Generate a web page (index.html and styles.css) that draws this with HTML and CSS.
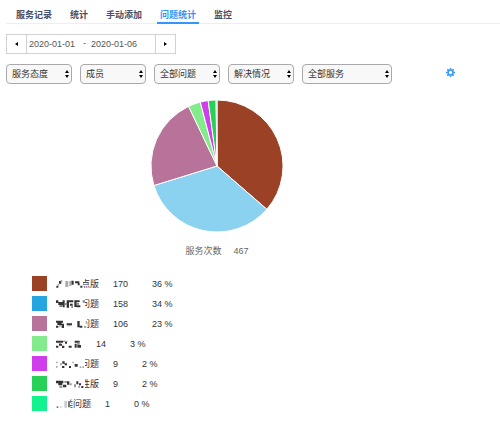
FILE: index.html
```
<!DOCTYPE html>
<html lang="zh-CN">
<head>
    <meta charset="UTF-8">
    <meta name="viewport" content="width=device-width, initial-scale=1.0">
    <title>问题统计</title>
    <link rel="stylesheet" href="styles.css">
</head>
<body>
    <nav class="tabs">
        <a href="#">服务记录</a>
        <a href="#">统计</a>
        <a href="#">手动添加</a>
        <a href="#" class="active">问题统计</a>
        <a href="#">监控</a>
    </nav>

    <div class="date-range">
        <button type="button" aria-label="前一段"><svg width="3" height="4" viewBox="0 0 3 4"><path d="M3 0v4L0 2z"/></svg></button>
        <div class="dates">
            <input type="text" value="2020-01-01" aria-label="开始日期">
            <span>-</span>
            <input type="text" value="2020-01-06" aria-label="结束日期">
        </div>
        <button type="button" aria-label="后一段"><svg width="3" height="4" viewBox="0 0 3 4"><path d="M0 0v4l3-2z"/></svg></button>
    </div>

    <div class="filters">
        <div class="select-box">
            <select aria-label="服务态度"><option>服务态度</option></select>
            <svg width="4" height="8" viewBox="0 0 4 8"><path d="M0 3l2-3 2 3zM0 5h4L2 8z"/></svg>
        </div>
        <div class="select-box">
            <select aria-label="成员"><option>成员</option></select>
            <svg width="4" height="8" viewBox="0 0 4 8"><path d="M0 3l2-3 2 3zM0 5h4L2 8z"/></svg>
        </div>
        <div class="select-box">
            <select aria-label="全部问题"><option>全部问题</option></select>
            <svg width="4" height="8" viewBox="0 0 4 8"><path d="M0 3l2-3 2 3zM0 5h4L2 8z"/></svg>
        </div>
        <div class="select-box">
            <select aria-label="解决情况"><option>解决情况</option></select>
            <svg width="4" height="8" viewBox="0 0 4 8"><path d="M0 3l2-3 2 3zM0 5h4L2 8z"/></svg>
        </div>
        <div class="select-box wide">
            <select aria-label="全部服务"><option>全部服务</option></select>
            <svg width="4" height="8" viewBox="0 0 4 8"><path d="M0 3l2-3 2 3zM0 5h4L2 8z"/></svg>
        </div>
        <button type="button" class="settings" aria-label="设置">
            <svg width="9" height="9" viewBox="0 0 18 18" fill="none" stroke="#3296fa">
                <circle cx="9" cy="9" r="5" stroke-width="3"/>
                <path stroke-width="3" d="M9 0v3M9 15v3M0 9h3M15 9h3M2.6 2.6l2.2 2.2M13.2 13.2l2.2 2.2M2.6 15.4l2.2-2.2M13.2 4.8l2.2-2.2"/>
            </svg>
        </button>
    </div>

    <div class="chart">
        <svg class="pie" width="134" height="134" viewBox="-67 -67 134 134">
            <path fill="#9b4226" d="M0 0V-66A66 66 0 0 1 49.8 43.3z"/>
            <path fill="#8bd2f0" d="M0 0L49.8 43.3A66 66 0 0 1 -63.1 19.5z"/>
            <path fill="#b8739a" d="M0 0L-63.1 19.5A66 66 0 0 1 -28.4 -59.6z"/>
            <path fill="#84eb8c" d="M0 0L-28.4 -59.6A66 66 0 0 1 -16.7 -63.9z"/>
            <path fill="#cf3eea" d="M0 0L-16.7 -63.9A66 66 0 0 1 -8.8 -65.4z"/>
            <path fill="#27d158" d="M0 0L-8.8 -65.4A66 66 0 0 1 -.9 -66z"/>
            <path fill="#12f28e" d="M0 0L-.9 -66A66 66 0 0 1 0 -66z"/>
        </svg>
        <p class="total"><span>服务次数</span><span>467</span></p>
    </div>

    <ul class="legend">
        <li>
            <i class="swatch brown"></i>
            <span class="name">点版
                <svg class="mask" width="27" height="10" viewBox="0 0 81 30"><path fill="#333" d="M9 6h7v8H9zM1 20h6v6H1zM46 5h7v12h-7zM57 7h13v6H57zM65 13h6v6h-6zM73 20h6v6h-6z"/><path fill="#aaa" d="M28 6h9v18h-9zM40 6h6v15h-6zM14 3h5v5h-5zM5 15h5v5H5z"/></svg>
            </span>
            <span class="count">170</span><span>36 %</span>
        </li>
        <li>
            <i class="swatch blue"></i>
            <span class="name">问题
                <svg class="mask" width="29" height="10" viewBox="0 0 87 30"><path fill="#333" d="M0 4h7v8H0zM7 9h13v9H7zM20 4h6v21h-6zM32 4h7v22h-7zM39 4h13v6H39zM42 14h8v6h-8zM55 4h7v20h-7zM62 4h9v5h-9zM62 19h11v6H62z"/><path fill="#888" d="M10 18h10v6H10zM26 12h6v6h-6zM46 20h5v7h-5zM63 11h6v6h-6zM80 4h7v7h-7z"/></svg>
            </span>
            <span class="count">158</span><span>34 %</span>
        </li>
        <li>
            <i class="swatch mauve"></i>
            <span class="name">问题
                <svg class="mask" width="31" height="10" viewBox="0 0 93 30"><path fill="#333" d="M0 5h21v6H0zM4 11h13v7H4zM0 20h7v6H0zM17 14h7v13h-7zM32 13h16v6H32zM64 6h7v19h-7zM71 20h8v6h-8z"/><path fill="#aaa" d="M9 18h8v5H9zM34 19h12v3H34zM84 21h7v6h-7zM89 6h4v8h-4z"/></svg>
            </span>
            <span class="count">106</span><span>23 %</span>
        </li>
        <li>
            <i class="swatch light"></i>
            <span class="name short">
                <svg class="mask" width="26" height="10" viewBox="0 0 78 30"><path fill="#333" d="M0 5h21v6H0zM9 14h9v6H9zM0 20h7v6H0zM18 20h7v7h-7zM27 8h6v6h-6zM38 20h9v6h-9zM56 5h15v6H56zM56 14h6v12h-6zM64 18h11v8H64z"/><path fill="#999" d="M8 11h7v4H8zM21 5h13v4H21zM63 11h8v7h-8z"/></svg>
            </span>
            <span class="count">14</span><span>3 %</span>
        </li>
        <li>
            <i class="swatch purple"></i>
            <span class="name">问题
                <svg class="mask" width="29" height="10" viewBox="0 0 87 30"><path fill="#333" d="M19 7h7v7h-7zM26 13h7v6h-7zM18 21h7v6h-7zM39 21h6v6h-6zM56 15h9v8h-9z"/><path fill="#aaa" d="M0 8h5v5H0zM0 21h5v5H0zM12 13h6v6h-6zM49 8h5v5h-5zM71 22h5v5h-5zM79 22h5v5h-5z"/></svg>
            </span>
            <span class="count">9</span><span>2 %</span>
        </li>
        <li>
            <i class="swatch green"></i>
            <span class="name">性版
                <svg class="mask" width="29" height="10" viewBox="0 0 87 30"><path fill="#333" d="M0 5h22v8H0zM7 13h12v6H7zM21 17h10v8H21zM33 7h7v10h-7zM61 7h6v9h-6zM69 13h6v6h-6zM76 21h6v6h-6z"/><path fill="#999" d="M10 20h9v7h-9zM25 6h8v6h-8zM40 13h7v6h-7zM54 16h6v9h-6zM67 20h5v6h-5z"/></svg>
            </span>
            <span class="count">9</span><span>2 %</span>
        </li>
        <li>
            <i class="swatch mint"></i>
            <span class="name medium">类问题
                <svg class="mask" width="14" height="10" viewBox="0 0 42 30"><path fill="#777" d="M2 22h5v5H2zM36 7h6v18h-6z"/><path fill="#ccc" d="M12 22h5v4h-5zM25 6h8v20h-8z"/></svg>
            </span>
            <span class="count">1</span><span>0 %</span>
        </li>
    </ul>
</body>
</html>
```
FILE: styles.css
```
* {
    box-sizing: border-box;
}
body {
    margin: 0;
    padding: 6px 0 18px 6px;
    background: #fff;
    color: #333;
    font: 9px/12px "Liberation Sans", "Noto Sans CJK SC", sans-serif;
}
button, input, select {
    font: inherit;
    color: inherit;
}
.tabs {
    display: flex;
    gap: 18px;
    padding-left: 10px;
    border-bottom: 1px solid #eee;
}
.tabs a {
    padding: 3px 0;
    margin-bottom: -1px;
    color: #465069;
    font-weight: bold;
    text-decoration: none;
    position: relative;
}
.tabs .active {
    color: #3296fa;
}
/* underline is a bit wider than the label */
.tabs .active::after {
    content: "";
    position: absolute;
    left: -3px;
    right: -3px;
    bottom: 0;
    height: 2px;
    background: #3296fa;
}
.date-range {
    display: flex;
    width: 170px;
    height: 20px;
    margin-top: 10px;
    border: 1px solid #d2d2d2;
}
.date-range button {
    display: flex;
    align-items: center;
    justify-content: center;
    width: 19px;
    padding: 0;
    border: 0;
    background: #fff;
}
.dates {
    display: flex;
    flex: 1;
    align-items: center;
    padding-left: 2px;
    border: solid #d2d2d2;
    border-width: 0 1px;
    color: #555;
}
.dates input {
    width: 50px;
    padding: 0;
    border: 0;
    background: none;
}
.dates span {
    width: 12px;
    padding: 0 0 3px 4px;
}
.filters {
    display: flex;
    gap: 8px;
    margin-top: 10px;
}
.select-box {
    position: relative;
    width: 66px;
}
.select-box.wide {
    width: 90px;
}
.select-box select {
    display: block;
    width: 100%;
    height: 20px;
    padding: 0 5px;
    border: 1px solid #aaa;
    border-radius: 4px;
    background: #f8f8f8;
    appearance: none;
}
.select-box svg {
    position: absolute;
    top: 6px;
    right: 3px;
    pointer-events: none;
}
.settings {
    align-self: flex-start;
    margin: 4px 0 0 46px;
    padding: 0;
    border: 0;
    background: none;
    line-height: 0;
}
.chart {
    width: 422px;
    max-width: 100%;
    margin-top: 15px;
    text-align: center;
}
.pie {
    display: block;
    margin: 0 auto;
}
.pie path {
    stroke: #fff;
    stroke-width: 1;
}
.total {
    display: flex;
    justify-content: center;
    gap: 12px;
    margin: 12px 0 0;
    color: #666;
}
.legend {
    display: flex;
    flex-direction: column;
    gap: 5px;
    margin: 19px 0 0;
    padding: 0 0 0 26px;
    list-style: none;
}
.legend li {
    display: flex;
    align-items: center;
    height: 15px;
}
.swatch {
    width: 15px;
    height: 15px;
    margin-right: 9px;
}
.brown { background: #9b4226; }
.blue { background: #26a5df; }
.mauve { background: #b8739a; }
.light { background: #84eb8c; }
.purple { background: #cf3eea; }
.green { background: #27d158; }
.mint { background: #12f28e; }
.name {
    position: relative;
    width: 43px;
    height: 12px;
    margin-right: 14px;
    text-align: right;
}
.name.short {
    width: 26px;
}
.name.medium {
    width: 35px;
}
.mask {
    position: absolute;
    top: 1px;
    left: 0;
    background: #fff;
}
.count {
    margin-right: 24px;
}
```
